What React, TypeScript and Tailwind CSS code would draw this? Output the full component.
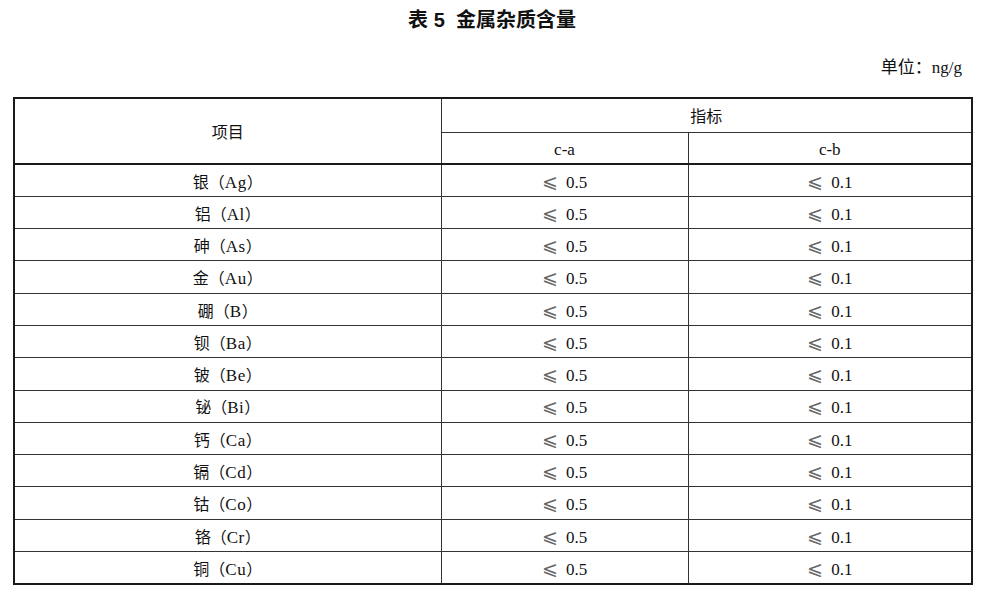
const rows: [string, string][] = [
  ['银', 'Ag'],
  ['铝', 'Al'],
  ['砷', 'As'],
  ['金', 'Au'],
  ['硼', 'B'],
  ['钡', 'Ba'],
  ['铍', 'Be'],
  ['铋', 'Bi'],
  ['钙', 'Ca'],
  ['镉', 'Cd'],
  ['钴', 'Co'],
  ['铬', 'Cr'],
  ['铜', 'Cu'],
];

const serif = "font-['Liberation_Serif','Noto_Sans_CJK_SC',serif]";

function Limit({ value }: { value: string }) {
  return (
    <span className="inline-flex items-baseline">
      <span className="text-[19px] leading-none font-['DejaVu_Sans',sans-serif] font-extralight text-[#666]">⩽</span>
      <span className="ml-[8px] text-[17px]">{value}</span>
    </span>
  );
}

export default function App() {
  return (
    <div className={`w-[984px] h-[591px] bg-white text-[#111] ${serif}`}>
      <h1 className="pt-[6px] text-center text-[20px] leading-[28px] font-bold font-['Liberation_Sans','Noto_Sans_CJK_SC',sans-serif]">
        表 5&nbsp;&nbsp;金属杂质含量
      </h1>
      <div className="mt-[22px] pr-[22px] text-right text-[17px] leading-[24px]">单位：ng/g</div>
      <table className="mt-[17px] ml-[13px] w-[958px] table-fixed border-collapse border-2 border-[#1a1a1a] text-[16px]">
        <colgroup>
          <col className="w-[427px]" />
          <col className="w-[247px]" />
          <col className="w-[284px]" />
        </colgroup>
        <thead>
          <tr className="h-[34px]">
            <th rowSpan={2} className="pt-[3px] font-normal border-r border-b-2 border-[#333] border-b-[#1a1a1a]">
              项目
            </th>
            <th colSpan={2} className="pt-[3px] font-normal border-b border-[#333]">
              指标
            </th>
          </tr>
          <tr className="h-[32px]">
            <th className="pt-[3px] text-[17px] font-normal border-r border-[#333] border-b-2 border-b-[#1a1a1a]">c-a</th>
            <th className="pt-[3px] text-[17px] font-normal border-b-2 border-[#1a1a1a]">c-b</th>
          </tr>
        </thead>
        <tbody>
          {rows.map(([zh, sym]) => (
            <tr key={sym} className="h-[32.3px]">
              <td className="pt-[4px] text-center border-r border-b border-[#333]">
                {zh}（<span className="text-[17px] tracking-[0.5px]">{sym}</span>）
              </td>
              <td className="pt-[4px] text-center border-r border-b border-[#333]">
                <Limit value="0.5" />
              </td>
              <td className="pt-[4px] text-center border-b border-[#333]">
                <Limit value="0.1" />
              </td>
            </tr>
          ))}
        </tbody>
      </table>
    </div>
  );
}
